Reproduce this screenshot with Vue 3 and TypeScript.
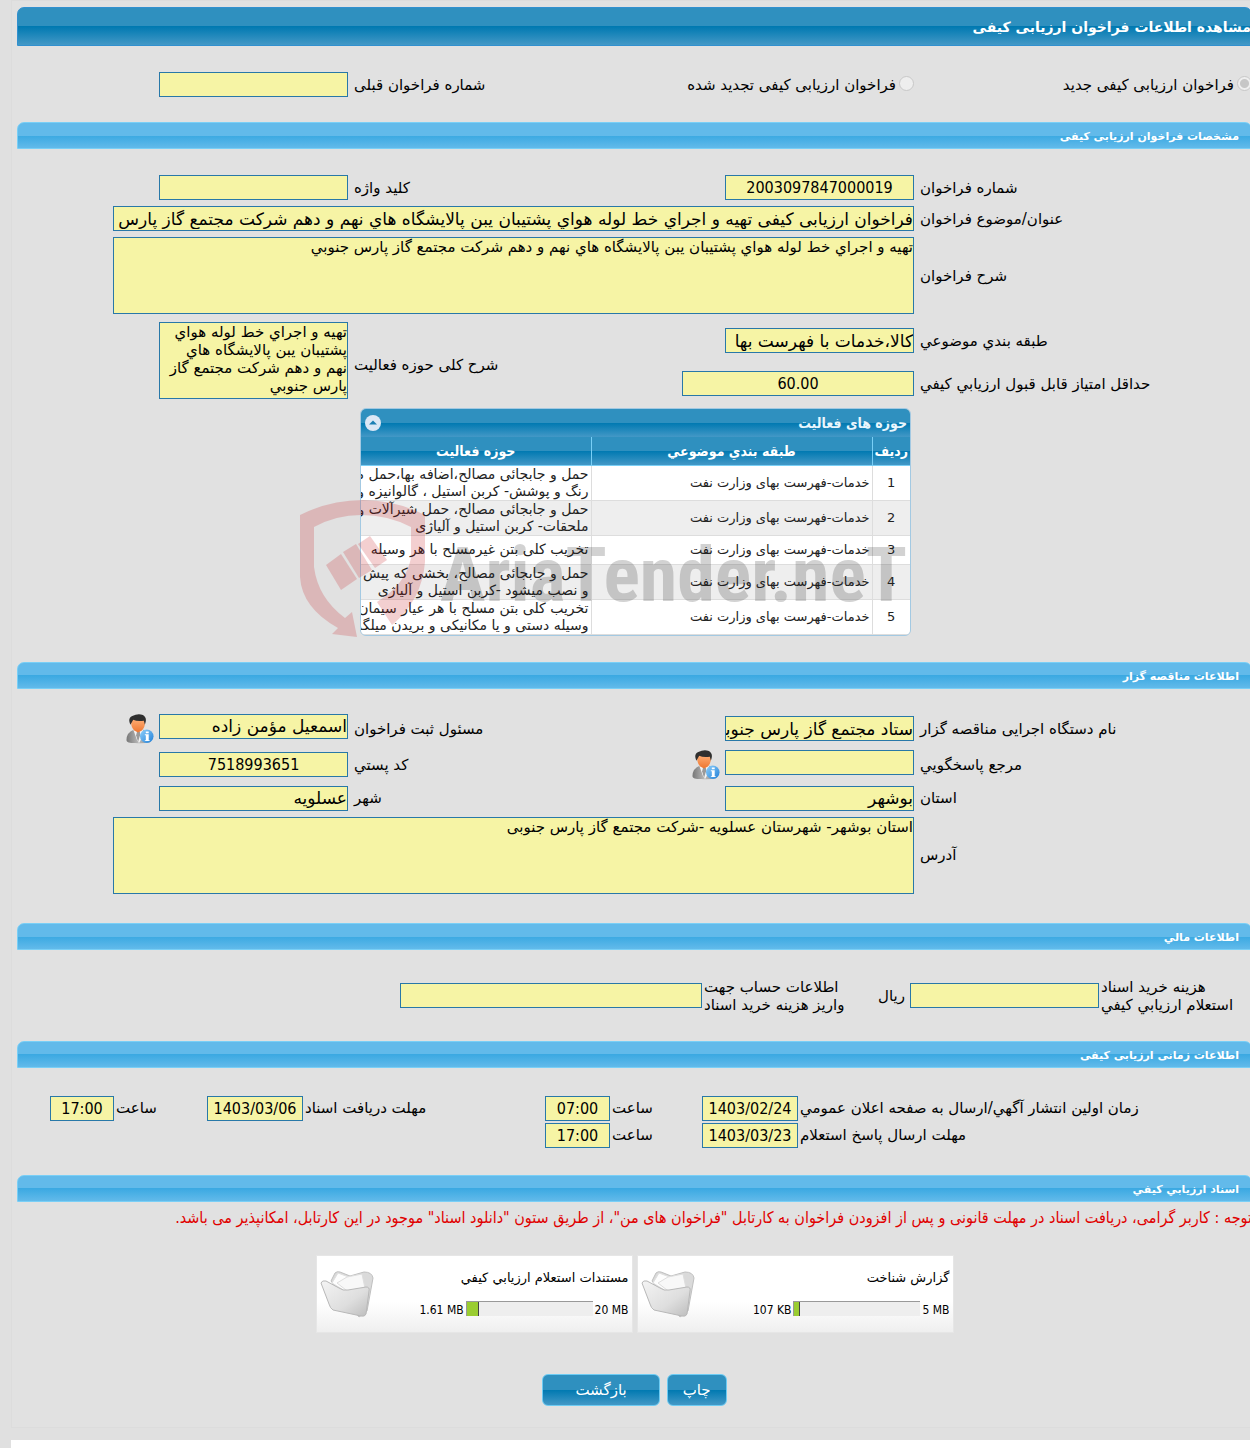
<script setup lang="ts">
interface Activity {
  id: number
  category: string
  lines: string[]
}

interface DocumentCard {
  title: string
  used: string
  limit: string
  percent: number
}

const category = 'خدمات-فهرست بهای وزارت نفت'

const activities: Activity[] = [
  { id: 1, category, lines: ['حمل و جابجائی مصالح،اضافه بها،حمل مصالح', 'رنگ و پوشش- کربن استیل ، گالوانیزه و آلیاژی'] },
  { id: 2, category, lines: ['حمل و جابجائی مصالح، حمل شیرآلات و', 'ملحقات- کربن استیل و آلیاژی'] },
  { id: 3, category, lines: ['تخریب کلی بتن غیرمسلح با هر وسیله'] },
  { id: 4, category, lines: ['حمل و جابجائی مصالح، بخشی که پیش', 'و نصب میشود -کربن استیل و آلیاژی'] },
  { id: 5, category, lines: ['تخریب کلی بتن مسلح با هر عیار سیمان', 'وسیله دستی و یا مکانیکی و بریدن میلگرد'] },
]

const documents: DocumentCard[] = [
  { title: 'گزارش شناخت', used: '107 KB', limit: '5 MB', percent: 4 },
  { title: 'مستندات استعلام ارزيابي کيفي', used: '1.61 MB', limit: '20 MB', percent: 10 },
]

const summary = 'تهيه و اجراي خط لوله هواي پشتيبان يبن پالايشگاه هاي نهم و دهم شرکت مجتمع گاز پارس جنوبي'
const address = 'استان بوشهر- شهرستان عسلویه -شرکت مجتمع گاز پارس جنوبی'
</script>

<template>
  <div class="page" dir="rtl" lang="fa">
    <main class="frame">
      <form class="panel" @submit.prevent>
        <h1 class="title-bar">مشاهده اطلاعات فراخوان ارزیابی کیفی</h1>

        <div class="grid kind-row">
          <label class="radio"><input type="radio" name="kind" checked disabled /><span>فراخوان ارزیابی کیفی جدید</span></label>
          <label class="radio"><input type="radio" name="kind" disabled /><span>فراخوان ارزیابی کیفی تجدید شده</span></label>
          <label class="label" for="previous">شماره فراخوان قبلی</label>
          <input id="previous" class="field" readonly />
        </div>

        <h2 class="section-bar">مشخصات فراخوان ارزیابی کیفی</h2>

        <div class="grid">
          <label class="label" for="number">شماره فراخوان</label>
          <input id="number" class="field number" value="2003097847000019" readonly />
          <label class="label" for="keyword">کلید واژه</label>
          <input id="keyword" class="field" readonly />

          <label class="label" for="subject">عنوان/موضوع فراخوان</label>
          <input id="subject" class="field wide" :value="`فراخوان ارزیابی کیفی ${summary}`" readonly />

          <label class="label" for="description">شرح فراخوان</label>
          <textarea id="description" class="field area wide" :value="summary" readonly></textarea>
        </div>

        <div class="grid scope">
          <label class="label" for="classification">طبقه بندي موضوعي</label>
          <input id="classification" class="field" value="کالا،خدمات با فهرست بها" readonly />
          <label class="label tall" for="scope">شرح کلی حوزه فعالیت</label>
          <textarea id="scope" class="field area tall" :value="summary" readonly></textarea>
          <label class="label" for="score">حداقل امتياز قابل قبول ارزيابي کيفي</label>
          <input id="score" class="field number score" value="60.00" readonly />
        </div>

        <div class="activities">
          <div class="grid-box">
            <div class="grid-title">
              <span>حوزه های فعالیت</span>
              <button type="button" class="collapse" aria-label="بستن جدول">
                <svg viewBox="0 0 16 16" width="16" height="16">
                  <circle cx="8" cy="8" r="8" fill="#dbe7f5" />
                  <path d="M4 9.500L8 5.500L12 9.500Z" fill="#1b7fb4" />
                </svg>
              </button>
            </div>
            <table>
              <thead>
                <tr>
                  <th class="col-index">ردیف</th>
                  <th class="col-category">طبقه بندي موضوعي</th>
                  <th>حوزه فعالیت</th>
                </tr>
              </thead>
              <tbody>
                <tr v-for="item in activities" :key="item.id">
                  <td class="center">{{ item.id }}</td>
                  <td>{{ item.category }}</td>
                  <td class="scope-text">
                    <div v-for="line in item.lines" :key="line">{{ line }}</div>
                  </td>
                </tr>
              </tbody>
            </table>
          </div>
          <div class="watermark" dir="ltr" aria-hidden="true">
            <svg viewBox="0 0 126 138" width="126" height="138">
              <g fill="#c4161c">
                <path d="M0 15Q30 0 63 0Q95 0 125 15V62Q122 100 92 125L77 102Q106 84 111 58V27Q88 15 61 15Q36 15 14 27V67Q18 98 45 118L52 112L57 137L32 134L38 128Q2 108 0 77Z" />
                <path d="M26 65L41 54L57 79L41 90Z" />
                <path d="M43 52L56 44L72 70L59 78Z" />
                <path d="M58 44L70 36L87 60L75 68Z" />
              </g>
            </svg>
            <span>AriaTender.neT</span>
          </div>
        </div>

        <h2 class="section-bar">اطلاعات مناقصه گزار</h2>

        <div class="grid agency-grid">
          <label class="label" for="agency">نام دستگاه اجرایی مناقصه گزار</label>
          <input id="agency" class="field" value="ستاد مجتمع گاز پارس جنوبی" readonly />
          <label class="label" for="registrar">مسئول ثبت فراخوان</label>
          <div class="with-icon">
            <input id="registrar" class="field" value="اسمعیل مؤمن زاده" readonly />
            <button type="button" class="person" aria-label="مشخصات مسئول ثبت"><svg width="30" height="30"><use href="#person" /></svg></button>
          </div>

          <label class="label" for="contact">مرجع پاسخگويي</label>
          <div class="with-icon">
            <input id="contact" class="field" readonly />
            <button type="button" class="person" aria-label="مشخصات مرجع"><svg width="30" height="30"><use href="#person" /></svg></button>
          </div>
          <label class="label" for="postal">کد پستي</label>
          <input id="postal" class="field number" value="7518993651" readonly />

          <label class="label" for="province">استان</label>
          <input id="province" class="field" value="بوشهر" readonly />
          <label class="label" for="city">شهر</label>
          <input id="city" class="field" value="عسلویه" readonly />

          <label class="label" for="address">آدرس</label>
          <textarea id="address" class="field area wide" :value="address" readonly></textarea>
        </div>

        <h2 class="section-bar">اطلاعات مالي</h2>

        <div class="finance">
          <label class="label" for="fee">هزینه خرید اسناد<br />استعلام ارزيابي کيفي</label>
          <input id="fee" class="field" readonly />
          <span class="unit">ریال</span>
          <label class="label" for="account">اطلاعات حساب جهت<br />واریز هزینه خرید اسناد</label>
          <input id="account" class="field" readonly />
        </div>

        <h2 class="section-bar">اطلاعات زمانی ارزیابی کیفی</h2>

        <div class="times">
          <label class="label" for="publish">زمان اولين انتشار آگهي/ارسال به صفحه اعلان عمومي</label>
          <input id="publish" class="field number" dir="ltr" value="1403/02/24" readonly />
          <label class="label" for="publish-time">ساعت</label>
          <input id="publish-time" class="field number" dir="ltr" value="07:00" readonly />
          <label class="label" for="receive">مهلت دریافت اسناد</label>
          <input id="receive" class="field number" dir="ltr" value="1403/03/06" readonly />
          <label class="label" for="receive-time">ساعت</label>
          <input id="receive-time" class="field number" dir="ltr" value="17:00" readonly />

          <label class="label second" for="reply">مهلت ارسال پاسخ استعلام</label>
          <input id="reply" class="field number" dir="ltr" value="1403/03/23" readonly />
          <label class="label" for="reply-time">ساعت</label>
          <input id="reply-time" class="field number" dir="ltr" value="17:00" readonly />
        </div>

        <h2 class="section-bar">اسناد ارزيابي کيفي</h2>

        <p class="notice">توجه : کاربر گرامی، دریافت اسناد در مهلت قانونی و پس از افزودن فراخوان به کارتابل "فراخوان های من"، از طریق ستون "دانلود اسناد" موجود در این کارتابل، امکانپذیر می باشد.</p>

        <div class="cards">
          <article v-for="doc in documents" :key="doc.title" class="card">
            <div class="card-body">
              <a class="card-title" href="#">{{ doc.title }}</a>
              <div class="usage" dir="ltr">
                <span>{{ doc.used }}</span>
                <div class="bar"><div class="fill" :style="{ width: `${doc.percent}%` }"></div></div>
                <span>{{ doc.limit }}</span>
              </div>
            </div>
            <svg class="folder" viewBox="0 0 54 50" width="54" height="50">
              <defs>
                <linearGradient id="folder-front" x1="0" y1="0" x2="1" y2="1">
                  <stop offset="0" stop-color="#f4f4f4" />
                  <stop offset="0.600" stop-color="#dedede" />
                  <stop offset="1" stop-color="#bcbcbc" />
                </linearGradient>
              </defs>
              <path d="M11 12L15 4Q17 2 20 3L30 7L44 3Q52 3 53 9L47 42L39 48Z" fill="#dadada" stroke="#c0c0c0" />
              <path d="M12 14L18 4L34 10L38 30Z" fill="#fdfdfd" stroke="#dfdfdf" />
              <path d="M17 14L27 8L42 5L46 24L40 32Z" fill="#f8f8f8" stroke="#dedede" />
              <path d="M1 14Q2 11 6 12L19 19Q23 22 28 21L46 18Q50 18 49 22L46 45Q45 48 41 47L13 41Q10 39 9 35Z" fill="url(#folder-front)" stroke="#b8b8b8" />
            </svg>
          </article>
        </div>

        <div class="actions">
          <button type="button" class="button">چاپ</button>
          <button type="button" class="button back">بازگشت</button>
        </div>
      </form>
    </main>
    <footer class="footer"></footer>

    <svg class="sprite" width="0" height="0" aria-hidden="true">
      <defs>
        <linearGradient id="suit" x1="0" x2="1">
          <stop offset="0" stop-color="#777" />
          <stop offset="0.500" stop-color="#b9b9b9" />
          <stop offset="1" stop-color="#8a8a8a" />
        </linearGradient>
        <linearGradient id="skin" x1="0" y1="0" x2="0" y2="1">
          <stop offset="0" stop-color="#ffb27a" />
          <stop offset="1" stop-color="#ee7630" />
        </linearGradient>
        <linearGradient id="badge" x1="0" y1="0" x2="1" y2="1">
          <stop offset="0" stop-color="#8fd0fb" />
          <stop offset="1" stop-color="#2180d8" />
        </linearGradient>
        <symbol id="person" viewBox="0 0 30 31">
          <path d="M1 27Q1 19 9 16H18Q26 19 26 29Q18 31 10 30Q1 30 1 27Z" fill="url(#suit)" />
          <path d="M8 16L12 27L14 30L18 23L18 16Z" fill="#f4f4f4" />
          <path d="M12 18H15V22L13 29L11 22Z" fill="#9a9a9a" />
          <path d="M6 6Q13 2 20 6Q21 13 17 17L13 19L9 17Q5 13 6 6Z" fill="url(#skin)" />
          <path d="M5 11Q2 4 7 2Q13 -1 18 1Q23 4 20 11L19 7Q12 8 8 6Q7 8 5 11Z" fill="#2f2f2f" />
          <circle cx="22" cy="23" r="7" fill="url(#badge)" />
          <path d="M21 18H24V20H21ZM20 21H24V27H25V28H20V27H21V22H20Z" fill="#fff" />
        </symbol>
      </defs>
    </svg>
  </div>
</template>

<style>
body {
  margin: 0;
  background: #fff;
}
</style>

<style scoped>
.page {
  --ink: #000;
  --field: #f6f4a5;
  --edge: #2878a8;
  --sans: "DejaVu Sans", sans-serif;
  --condensed: "DejaVu Sans Condensed", "DejaVu Sans", sans-serif;
  --deep: linear-gradient(#2f90bf 0 50%, #0079b1 50%, #4398c6);
  --light: linear-gradient(#62baea 0 50%, #3ba9e2 50%, #62baea);
  box-sizing: border-box;
  overflow: hidden;
  padding-left: 11px;
  background: #e0e0e0;
  color: var(--ink);
  font: 15px/18px var(--sans);
}

.frame {
  border: 1px solid #dcdcdc;
  border-right: 0;
  background: #e1e1e1;
}

.panel {
  margin: 6px -2px 21px 5px;
}

.title-bar,
.section-bar {
  box-sizing: border-box;
  margin: 0;
  color: #fff;
  font-weight: bold;
  white-space: nowrap;
}

.title-bar {
  height: 39px;
  border: 1px solid #3190cf;
  border-radius: 7px 7px 0 0;
  background: var(--deep);
  font-size: 14px;
  line-height: 38px;
}

.section-bar {
  height: 27px;
  padding: 0 12px;
  border: 1px solid #79cff6;
  border-radius: 7px 7px 0 0;
  background: var(--light);
  font-size: 11px;
  line-height: 28px;
}

.grid {
  display: grid;
  grid-template-columns: 332px minmax(0, 1fr) 146px 331px;
  gap: 6px;
  align-items: center;
  padding-top: 26px;
}

.kind-row {
  padding-bottom: 25px;
}

.label {
  text-align: left;
  white-space: nowrap;
}

.radio {
  display: flex;
  gap: 3px;
  white-space: nowrap;
}

.radio input {
  appearance: none;
  flex: none;
  box-sizing: border-box;
  width: 15px;
  height: 15px;
  margin: 0;
  border: 1px solid #c8c8c8;
  border-radius: 50%;
  background: #eee;
}

.radio input:checked {
  background: radial-gradient(circle, #c6c6c6 0 4px, #eee 5px);
}

.field {
  box-sizing: border-box;
  width: 189px;
  height: 25px;
  margin: 0;
  padding: 0;
  border: 1px solid var(--edge);
  border-radius: 0;
  outline: 0;
  background: var(--field);
  color: var(--ink);
  font: 17px/22px var(--sans);
}

.number {
  font: 16px/22px var(--condensed);
  text-align: center;
}

.score {
  width: 232px;
}

.area {
  display: block;
  height: 77px;
  padding-left: 4px;
  overflow: hidden;
  resize: none;
  font-size: 15px;
  line-height: 18px;
}

.wide {
  grid-column: 2 / -1;
  width: calc(100% - 96px);
}

.scope {
  grid-template-rows: 37px 49px;
  row-gap: 0;
  padding-top: 8px;
}

.tall {
  grid-row: 1 / 3;
}

.scope .label.tall {
  grid-column: 3;
}

.scope .area {
  grid-column: 4;
  align-self: start;
}

.activities {
  position: relative;
  width: 551px;
  margin-right: 341px;
  padding-bottom: 26px;
}

.grid-box {
  overflow: hidden;
  border: 1px solid #a3c9e2;
  border-radius: 6px;
  box-sizing: border-box;
}

.grid-title {
  display: flex;
  justify-content: space-between;
  align-items: center;
  height: 28px;
  padding: 0 3px 0 4px;
  background: var(--deep);
  color: #e9f6fd;
  font: bold 14px/18px var(--condensed);
}

.collapse,
.person {
  display: block;
  padding: 0;
  border: 0;
  background: none;
}

.collapse svg,
.person svg {
  display: block;
}

table {
  width: 100%;
  border-collapse: collapse;
  table-layout: fixed;
}

thead tr {
  background: var(--deep);
}

th {
  box-sizing: border-box;
  height: 28px;
  padding: 0;
  border-left: 1px solid #79cff6;
  border-bottom: 1px solid #79cff6;
  color: #fff;
  font: bold 14px/18px var(--condensed);
}

.col-index {
  width: 38px;
}

.col-category {
  width: 281px;
}

td {
  box-sizing: border-box;
  height: 29px;
  padding: 0 2px;
  overflow: hidden;
  border-left: 1px solid #ddd;
  border-bottom: 1px solid #ddd;
  color: #222;
  font-size: 13px;
  line-height: 17px;
  white-space: nowrap;
}

.scope-text {
  font-size: 14px;
}

th:last-child,
td:last-child {
  border-left: 0;
}

tbody tr {
  background: #fff;
}

tbody tr:nth-child(even) {
  background: #eee;
}

.center {
  text-align: center;
}

.watermark {
  position: absolute;
  top: 92px;
  left: -60px;
  display: flex;
  gap: 14px;
  opacity: 0.2;
  pointer-events: none;
}

.watermark span {
  padding-top: 35px;
  color: #222;
  font: bold 76px/80px "Roboto Condensed", "Liberation Sans", sans-serif;
}

.with-icon {
  display: flex;
  align-items: flex-start;
  gap: 4px;
}

.agency-grid {
  padding: 25px 0 29px;
}

.finance,
.times {
  display: grid;
  gap: 2px;
  align-items: center;
}

.finance {
  grid-template-columns: 151px 189px 40px 162px 302px;
  padding: 28px 0 27px;
}

.finance .field {
  width: 100%;
}

.unit {
  padding-right: 3px;
}

.times {
  grid-template-columns: 452px 96px 88px 65px 238px 96px 89px 64px;
  padding: 28px 0 27px;
}

.times .field {
  width: 100%;
}

.second {
  grid-column: 1;
}

.notice {
  margin: 7px 0 28px;
  color: #e00000;
  font: 16px/18px var(--condensed);
  white-space: nowrap;
}

.cards {
  display: flex;
  justify-content: center;
  gap: 4px;
}

.card {
  display: flex;
  align-items: center;
  gap: 3px;
  box-sizing: border-box;
  width: 317px;
  height: 78px;
  padding: 0 3px;
  border: 1px solid #e6e6e6;
  background: linear-gradient(#fff 60%, #efefef);
}

.card-body {
  display: flex;
  flex: 1;
  flex-direction: column;
  gap: 14px;
}

.card-title {
  color: #000;
  font-size: 13px;
  text-decoration: none;
}

.usage {
  display: flex;
  justify-content: flex-end;
  gap: 2px;
  font: 12px/18px var(--condensed);
}

.bar {
  box-sizing: border-box;
  width: 127px;
  height: 15px;
  border-top: 1px solid #999;
  border-left: 1px solid #999;
  background: #eee;
}

.fill {
  box-sizing: border-box;
  height: 100%;
  border-right: 1px solid #444;
  background: #9acd32;
}

.folder {
  flex: none;
}

.actions {
  display: flex;
  justify-content: center;
  gap: 7px;
  padding-top: 41px;
}

.button {
  height: 32px;
  padding: 0 15px;
  border: 1px solid #6ccbf3;
  border-radius: 6px;
  background: var(--deep);
  color: #fff;
  font: 15px/18px var(--sans);
}

.back {
  padding: 0 32px;
}

.footer {
  height: 8px;
  margin-top: 12px;
  background: #fff;
}

.sprite {
  position: absolute;
}
</style>
